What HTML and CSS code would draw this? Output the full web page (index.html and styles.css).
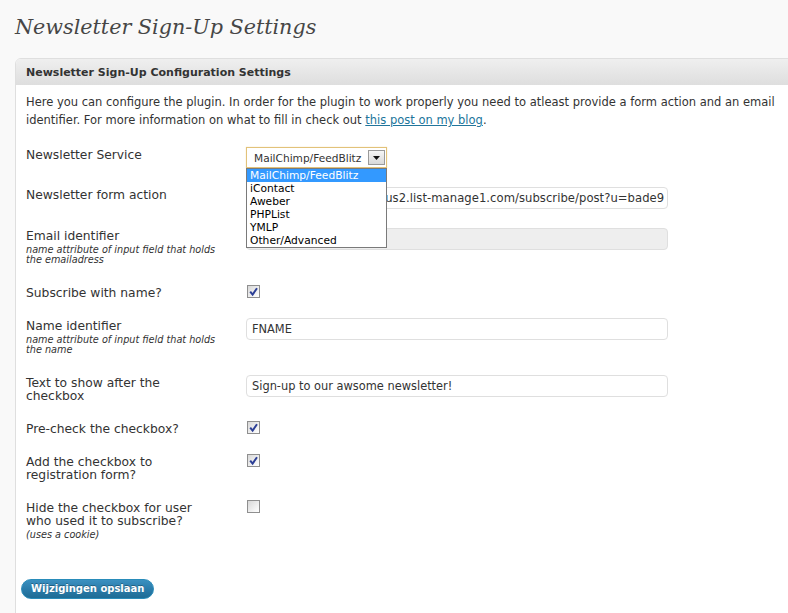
FILE: index.html
```html
<!DOCTYPE html>
<html>
<head>
<meta charset="utf-8">
<title>Newsletter Sign-Up Settings</title>
<link rel="stylesheet" href="styles.css">
</head>
<body>
<div class="wrap">
  <h2 class="page-title">Newsletter Sign-Up Settings</h2>
  <div class="postbox">
    <h3 class="postbox-head">Newsletter Sign-Up Configuration Settings</h3>
    <div class="inside">
      <p class="intro">Here you can configure the plugin. In order for the plugin to work properly you need to atleast provide a form action and an email identifier. For more information on what to fill in check out <a href="#">this post on my blog</a>.</p>

      <div class="form-table">
        <div class="row">
          <div class="label">Newsletter Service</div>
          <div class="field">
            <div class="select">
              <span class="select-value">MailChimp/FeedBlitz</span>
              <span class="select-arrow"><svg width="7" height="4" viewBox="0 0 7 4"><path d="M0 0H7L3.5 4Z" fill="#111"/></svg></span>
              <ul class="options">
                <li class="selected">MailChimp/FeedBlitz</li>
                <li>iContact</li>
                <li>Aweber</li>
                <li>PHPList</li>
                <li>YMLP</li>
                <li>Other/Advanced</li>
              </ul>
            </div>
          </div>
        </div>

        <div class="row">
          <div class="label">Newsletter form action</div>
          <div class="field"><input class="text url" type="text" value="http://dannyvankooten.us2.list-manage1.com/subscribe/post?u=bade91c3a84e56d27&amp;id=4a8b2c"></div>
        </div>

        <div class="row">
          <div class="label">Email identifier<small>name attribute of input field that holds the emailadress</small></div>
          <div class="field"><input class="text readonly" type="text" value="EMAIL"></div>
        </div>

        <div class="row">
          <div class="label">Subscribe with name?</div>
          <div class="field"><span class="checkbox checked"><svg width="11" height="11" viewBox="0 0 11 11"><path d="M2.2 5.6L4.6 8.6L9 2.2" fill="none" stroke="#2c3f96" stroke-width="2"/></svg></span></div>
        </div>

        <div class="row">
          <div class="label">Name identifier<small>name attribute of input field that holds the name</small></div>
          <div class="field"><input class="text" type="text" value="FNAME"></div>
        </div>

        <div class="row">
          <div class="label">Text to show after the checkbox</div>
          <div class="field"><input class="text" type="text" value="Sign-up to our awsome newsletter!"></div>
        </div>

        <div class="row">
          <div class="label">Pre-check the checkbox?</div>
          <div class="field"><span class="checkbox checked"><svg width="11" height="11" viewBox="0 0 11 11"><path d="M2.2 5.6L4.6 8.6L9 2.2" fill="none" stroke="#2c3f96" stroke-width="2"/></svg></span></div>
        </div>

        <div class="row">
          <div class="label">Add the checkbox to registration form?</div>
          <div class="field"><span class="checkbox checked"><svg width="11" height="11" viewBox="0 0 11 11"><path d="M2.2 5.6L4.6 8.6L9 2.2" fill="none" stroke="#2c3f96" stroke-width="2"/></svg></span></div>
        </div>

        <div class="row">
          <div class="label">Hide the checkbox for user who used it to subscribe?<small>(uses a cookie)</small></div>
          <div class="field"><span class="checkbox"></span></div>
        </div>
      </div>

      <p class="submit"><button class="button-primary" type="button">Wijzigingen opslaan</button></p>
    </div>
  </div>
</div>
</body>
</html>
```

FILE: styles.css
```css
html, body {
  margin: 0;
  height: 100%;
  overflow: hidden;
  background: #f9f9f9;
}

body {
  font-family: "DejaVu Sans", Verdana, sans-serif;
  color: #333;
}

.wrap {
  width: 800px;
  padding-left: 15px;
}

.page-title {
  margin: 0;
  padding-top: 13px;
  font-family: "DejaVu Serif", Georgia, serif;
  font-style: italic;
  font-weight: normal;
  font-size: 20.7px;
  line-height: 29px;
  color: #464646;
}

.postbox {
  margin-top: 16px;
  border: 1px solid #dfdfdf;
  border-radius: 6px 6px 0 0;
  background: #fff;
  height: 600px;
}

.postbox-head {
  margin: 0;
  height: 26px;
  padding: 0 10px;
  font-size: 11px;
  font-weight: bold;
  line-height: 27px;
  color: #333;
  background: linear-gradient(#efefef, #dedede);
  border-radius: 5px 5px 0 0;
}

.inside {
  padding: 8px 10px 0 10px;
}

.intro {
  margin: 0 0 10px;
  font-size: 11.5px;
  line-height: 18px;
}

.intro a {
  color: #21759b;
}

.row {
  display: grid;
  grid-template-columns: 192px 422px;
  column-gap: 28px;
}

.label {
  padding: 10px 0;
  font-size: 12.3px;
  line-height: 13px;
}

.label small {
  display: block;
  margin: 2px 0;
  font-size: 9.7px;
  line-height: 10px;
  font-style: italic;
}

.field {
  padding: 8px 0 11px;
}

.text {
  display: block;
  box-sizing: border-box;
  width: 422px;
  height: 22px;
  margin: 0;
  padding: 0 2px 0 5px;
  border: 1px solid #dfdfdf;
  border-radius: 4px;
  background: #fff;
  font-family: "DejaVu Sans", Verdana, sans-serif;
  font-size: 11.4px;
  color: #333;
  outline: none;
}

.text.url {
  padding-left: 1px;
  font-size: 11.6px;
  letter-spacing: 0.05px;
}

.text.readonly {
  background: #eeeeee;
}

.select {
  position: relative;
  box-sizing: border-box;
  width: 141px;
  height: 21px;
  border: 1px solid #e2c27a;
  box-shadow: 0 0 1px #f0dca8;
  background: #fff;
  display: flex;
  align-items: center;
  justify-content: space-between;
  padding: 0 1px 0 7px;
  font-size: 10.6px;
}

.select-value {
  color: #333;
}

.select-arrow {
  box-sizing: border-box;
  width: 17px;
  height: 15px;
  border: 1px solid #9a9a9a;
  background: linear-gradient(#f6f6f6, #d9d9d9);
  display: flex;
  align-items: center;
  justify-content: center;
}

.options {
  position: absolute;
  top: 100%;
  left: -1px;
  z-index: 5;
  box-sizing: border-box;
  width: 141px;
  margin: 1px 0 0;
  padding: 0;
  list-style: none;
  border: 1px solid #7a7a7a;
  background: #fff;
}

.options li {
  height: 13px;
  padding-left: 3px;
  font-size: 10.7px;
  line-height: 13px;
  color: #000;
}

.options li.selected {
  background: #3399ff;
  color: #fff;
}

.checkbox {
  display: block;
  box-sizing: border-box;
  width: 13px;
  height: 13px;
  margin-left: 1px;
  border: 1px solid #8f8f8f;
  background: linear-gradient(135deg, #d8d8d8, #f4f4f4 70%, #fff);
}

.checkbox svg {
  display: block;
}

.submit {
  margin: 0 0 0 -5px;
  padding: 25px 0 0;
}

.button-primary {
  display: inline-block;
  height: 20px;
  padding: 0 9px;
  border: 1px solid #298cba;
  border-radius: 11px;
  background: linear-gradient(#3b90c0, #2a7cab 50%, #1f6c95);
  color: #fff;
  font-family: "DejaVu Sans", Verdana, sans-serif;
  font-size: 10px;
  font-weight: bold;
  line-height: 18px;
  text-shadow: 0 -1px 0 rgba(0, 0, 0, 0.3);
  cursor: pointer;
}
```
